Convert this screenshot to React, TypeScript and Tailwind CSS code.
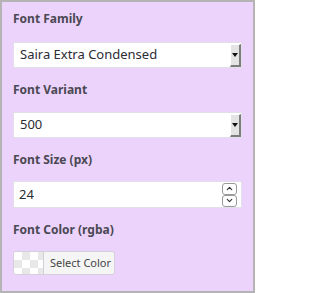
import { ChevronUp, ChevronDown } from "lucide-react";

function Label({ children }: { children: React.ReactNode }) {
  return (
    <div className="text-[12px] leading-[18px] font-bold text-[#4a4852]">{children}</div>
  );
}

function FakeSelect({ value }: { value: string }) {
  return (
    <div className="flex h-[26px] items-stretch border border-[#e2dfe6] bg-white">
      <div className="flex flex-1 items-center pl-[6px] text-[13px] text-[#2c2c34]">{value}</div>
      <div className="mt-[1px] flex w-[11px] items-center justify-center border-t border-l border-t-white border-l-white border-r-2 border-b-2 border-r-[#7c7c7c] border-b-[#7c7c7c] bg-[#e3e3e3]">
        <svg width="6" height="4" viewBox="0 0 6 4">
          <path d="M0 0h6L3 4z" fill="#111" />
        </svg>
      </div>
    </div>
  );
}

export default function App() {
  return (
    <div
      className="w-[255px] h-[293px] border-2 border-[#b4b4b4] bg-[#ebd3fb] px-[11px] pt-[8px]"
      style={{ fontFamily: '"Noto Sans", "Open Sans", sans-serif' }}
    >
      <Label>Font Family</Label>
      <div className="mt-[14px]">
        <FakeSelect value="Saira Extra Condensed" />
      </div>

      <div className="mt-[13px]">
        <Label>Font Variant</Label>
      </div>
      <div className="mt-[13px]">
        <FakeSelect value="500" />
      </div>

      <div className="mt-[13px]">
        <Label>Font Size (px)</Label>
      </div>
      <div className="mt-[12px] flex h-[27px] items-center border border-[#e2dfe6] bg-white pl-[5px] pr-[4px]">
        <div className="flex-1 text-[13px] text-[#2c2c34]">24</div>
        <div className="flex flex-col">
          <div className="flex h-[12px] w-[15px] items-center justify-center rounded-[3px] border border-[#9a9a9a] bg-white">
            <ChevronUp className="h-[9px] w-[9px] text-[#333]" strokeWidth={3} />
          </div>
          <div className="flex h-[12px] w-[15px] items-center justify-center rounded-[3px] border border-[#9a9a9a] bg-white">
            <ChevronDown className="h-[9px] w-[9px] text-[#333]" strokeWidth={3} />
          </div>
        </div>
      </div>

      <div className="mt-[13px]">
        <Label>Font Color (rgba)</Label>
      </div>
      <div className="mt-[12px] flex h-[24px] w-[102px] overflow-hidden rounded-[3px] border border-[#d4d0d8] bg-[#f5f5f5]">
        <div className="w-[30px] border-r border-[#d4d0d8] bg-[length:16px_16px] bg-[conic-gradient(#e8e8e8_25%,#ffffff_0_50%,#e8e8e8_0_75%,#ffffff_0)]" />
        <div className="flex flex-1 items-center pl-[6px] text-[11px] text-[#444]">Select Color</div>
      </div>
    </div>
  );
}
